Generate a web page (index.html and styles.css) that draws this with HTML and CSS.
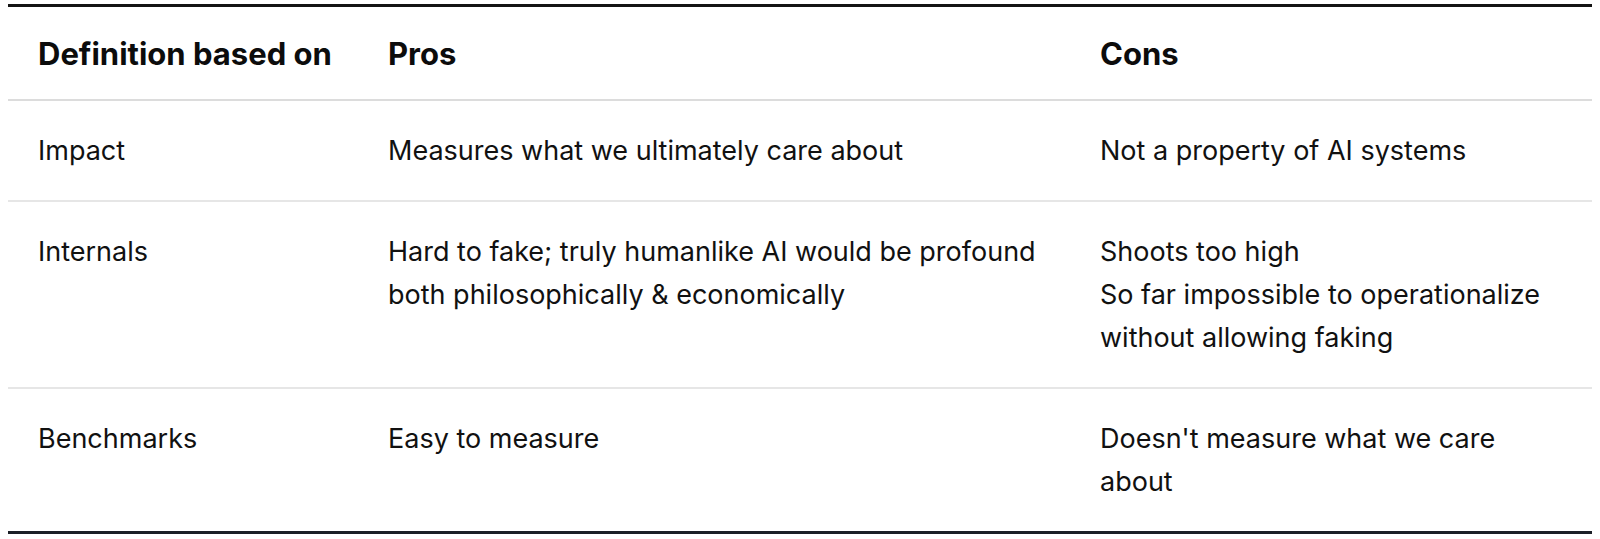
FILE: index.html
```html
<!DOCTYPE html>
<html lang="en">
<head>
<meta charset="utf-8">
<title>Definitions of AI</title>
<link rel="stylesheet" href="styles.css">
</head>
<body>
<table class="compare">
  <colgroup>
    <col class="c1">
    <col class="c2">
    <col class="c3">
  </colgroup>
  <thead>
    <tr>
      <th>Definition based on</th>
      <th>Pros</th>
      <th>Cons</th>
    </tr>
  </thead>
  <tbody>
    <tr>
      <td>Impact</td>
      <td>Measures what we ultimately care about</td>
      <td>Not a property of AI systems</td>
    </tr>
    <tr>
      <td>Internals</td>
      <td>Hard to fake; truly humanlike AI would be profound both philosophically &amp; economically</td>
      <td>Shoots too high<br>So far impossible to operationalize without allowing faking</td>
    </tr>
    <tr>
      <td>Benchmarks</td>
      <td>Easy to measure</td>
      <td>Doesn't measure what we care about</td>
    </tr>
  </tbody>
</table>
</body>
</html>
```

FILE: styles.css
```css
html, body {
  background: #ffffff;
}
body {
  margin: 4px 8px;
  font-family: Inter, "Liberation Sans", sans-serif;
  color: #111111;
}
.compare {
  width: 1584px;
  border-collapse: collapse;
  table-layout: fixed;
  border-top: 3px solid #141414;
  border-bottom: 3px solid #1b1f27;
}
.compare .c1 { width: 350px; }
.compare .c2 { width: 712px; }
.compare .c3 { width: 522px; }
.compare th,
.compare td {
  text-align: left;
  vertical-align: top;
  font-size: 27px;
  line-height: 43px;
  padding: 28px 30px;
}
.compare th {
  font-size: 31px;
  font-weight: 700;
  color: #0c0c0c;
  white-space: nowrap;
  padding: 25px 10px 24px 30px;
  border-bottom: 2px solid #dcdcdc;
}
.compare td {
  font-weight: 400;
}
.compare tbody tr + tr td {
  border-top: 2px solid #e6e6e6;
}
```
